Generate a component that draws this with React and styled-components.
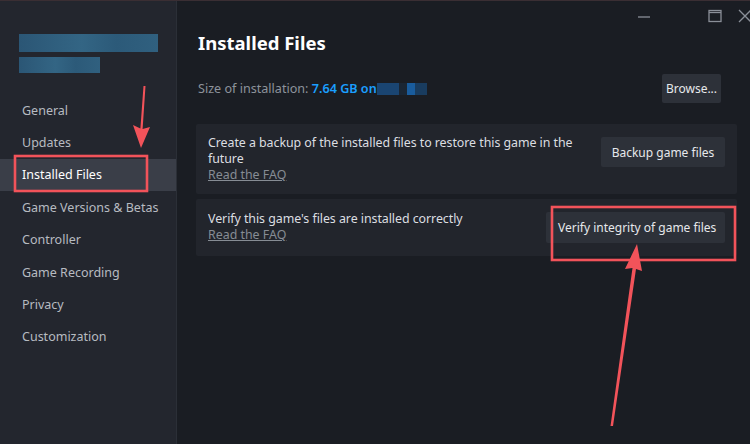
import React from "react";
import styled, { createGlobalStyle } from "styled-components";

const Global = createGlobalStyle`
  html, body { margin: 0; padding: 0; background: #1a1d23; }
  body { font-family: "Noto Sans", "Liberation Sans", sans-serif; }
`;

const menu = [
  "General",
  "Updates",
  "Installed Files",
  "Game Versions & Betas",
  "Controller",
  "Game Recording",
  "Privacy",
  "Customization",
];

const App = () => {
  return (
    <Window>
      <Global />
      <Sidebar>
        <Blur>
          <BlurBar $w={139} />
          <BlurBar $w={81} $h={16} />
        </Blur>
        <Menu>
          {menu.map((m) => (
            <MenuItem key={m} $active={m === "Installed Files"}>
              {m}
            </MenuItem>
          ))}
        </Menu>
      </Sidebar>
      <Main>
        <TitleBar>
          <WinIcon $gap={57}>
            <svg width="14" height="14" viewBox="0 0 14 14">
              <path d="M1 8h12" stroke="#8a8f98" strokeWidth="1.3" />
            </svg>
          </WinIcon>
          <WinIcon $gap={16}>
            <svg width="14" height="14" viewBox="0 0 14 14">
              <rect x="1" y="1.5" width="12" height="11" fill="none" stroke="#8a8f98" strokeWidth="1.3" />
              <path d="M1 3.5h12" stroke="#8a8f98" strokeWidth="1.3" />
            </svg>
          </WinIcon>
          <WinIcon>
            <svg width="14" height="14" viewBox="0 0 14 14">
              <path d="M1 1l12 12M13 1L1 13" stroke="#8a8f98" strokeWidth="1.3" />
            </svg>
          </WinIcon>
        </TitleBar>
        <Title>Installed Files</Title>
        <SizeRow>
          <SizeText>
            Size of installation: <Blue>7.64 GB on</Blue>
            <Pixel $w={22} $o={0.45} />
            <Pixel $w={8} $o={0.1} />
            <Pixel $w={8} $o={0.7} />
            <Pixel $w={12} $o={0.35} />
          </SizeText>
          <Button $w={59} $h={29}>Browse...</Button>
        </SizeRow>
        <Cards>
          <Card $h={70} $pt={11}>
            <CardText>
              <Desc>Create a backup of the installed files to restore this game in the future</Desc>
              <Faq>Read the FAQ</Faq>
            </CardText>
            <Button $w={124} $h={30} $mt={2}>Backup game files</Button>
          </Card>
          <Card $h={57} $pt={12}>
            <CardText>
              <Desc>Verify this game's files are installed correctly</Desc>
              <Faq>Read the FAQ</Faq>
            </CardText>
            <Button $w={179} $h={31} $left $mt={1}>Verify integrity of game files</Button>
          </Card>
        </Cards>
      </Main>
      <Overlay width="750" height="444" viewBox="0 0 750 444">
        <rect x="15" y="155" width="132" height="35" fill="none" stroke="#f2535a" strokeWidth="2.6" />
        <rect x="552" y="206" width="183" height="53" fill="none" stroke="#f2535a" strokeWidth="2.6" />
        <path d="M143.5 85 L145.5 85 L142.6 128 L150 126 L141 147 L133 124 L140.4 127.5 Z" fill="#f2535a" />
        <path d="M610.5 425 L613 425 L636 268 L642 270 L637 243 L625 268 L632.5 267 Z" fill="#f2535a" />
      </Overlay>
    </Window>
  );
};

const Window = styled.div`
  position: relative;
  width: 750px;
  height: 444px;
  display: flex;
  overflow: hidden;
  background: #1a1d23;
  border-top: 1px solid #3a2e33;
  box-sizing: border-box;
`;

const Sidebar = styled.div`
  width: 177px;
  flex-shrink: 0;
  background: #23262e;
  border-right: 1px solid #2b2f37;
  display: flex;
  flex-direction: column;
  padding-top: 33px;
  box-sizing: border-box;
`;

const Blur = styled.div`
  display: flex;
  flex-direction: column;
  gap: 5px;
  padding-left: 19px;
`;

const BlurBar = styled.div`
  width: ${(p) => p.$w}px;
  height: ${(p) => p.$h || 18}px;
  background: linear-gradient(90deg, #2b5675, #336584 45%, #2c5a79 70%, #30607f);
`;

const Menu = styled.div`
  display: flex;
  flex-direction: column;
  margin-top: 21px;
`;

const MenuItem = styled.div`
  height: 32.4px;
  display: flex;
  align-items: center;
  padding-left: 22px;
  font-size: 12.5px;
  color: ${(p) => (p.$active ? "#ffffff" : "#b7bbc1")};
  background: ${(p) => (p.$active ? "#3a3e48" : "transparent")};
`;

const Main = styled.div`
  flex: 1;
  min-width: 0;
  display: flex;
  flex-direction: column;
  padding: 0 14px 0 21px;
`;

const TitleBar = styled.div`
  height: 29px;
  display: flex;
  justify-content: flex-end;
  align-items: center;
  margin-right: -16px;
`;

const WinIcon = styled.div`
  width: 14px;
  height: 14px;
  flex-shrink: 0;
  display: flex;
  margin-right: ${(p) => p.$gap || 0}px;
`;

const Title = styled.h1`
  margin: 0;
  margin-top: 1px;
  font-size: 18.5px;
  font-weight: 700;
  color: #ffffff;
  line-height: 24px;
`;

const SizeRow = styled.div`
  display: flex;
  align-items: center;
  justify-content: space-between;
  margin-top: 19px;
  padding-right: 15px;
`;

const SizeText = styled.div`
  display: flex;
  align-items: center;
  font-size: 12.6px;
  color: #8d939b;
  white-space: pre;
`;

const Blue = styled.span`
  color: #1a9fff;
  font-weight: 600;
`;

const Pixel = styled.span`
  display: inline-block;
  width: ${(p) => p.$w}px;
  height: 12px;
  background: rgba(26, 120, 210, ${(p) => p.$o});
`;

const Button = styled.div`
  width: ${(p) => p.$w}px;
  height: ${(p) => p.$h}px;
  margin-top: ${(p) => p.$mt || 0}px;
  flex-shrink: 0;
  display: flex;
  align-items: center;
  justify-content: ${(p) => (p.$left ? "flex-start" : "center")};
  padding-left: ${(p) => (p.$left ? "12px" : "0")};
  box-sizing: border-box;
  background: #2d3139;
  border-radius: 2px;
  color: #e6e8eb;
  font-size: 12px;
  white-space: nowrap;
  align-self: flex-start;
`;

const Cards = styled.div`
  display: flex;
  flex-direction: column;
  gap: 5px;
  margin-top: 21px;
  margin-left: -2px;
  margin-right: -1px;
`;

const Card = styled.div`
  height: ${(p) => p.$h}px;
  box-sizing: border-box;
  background: #22252c;
  border-radius: 2px;
  display: flex;
  justify-content: space-between;
  padding: ${(p) => p.$pt || 13}px 12px 0 12px;
`;

const CardText = styled.div`
  flex: 1;
  min-width: 0;
  display: flex;
  flex-direction: column;
`;

const Desc = styled.div`
  font-size: 12.4px;
  letter-spacing: -0.05px;
  line-height: 16px;
  color: #dcdee1;
`;

const Faq = styled.div`
  font-size: 12.4px;
  line-height: 16px;
  color: #868c94;
  text-decoration: underline;
`;

const Overlay = styled.svg`
  position: absolute;
  left: 0;
  top: 0;
  pointer-events: none;
`;

export default App;
